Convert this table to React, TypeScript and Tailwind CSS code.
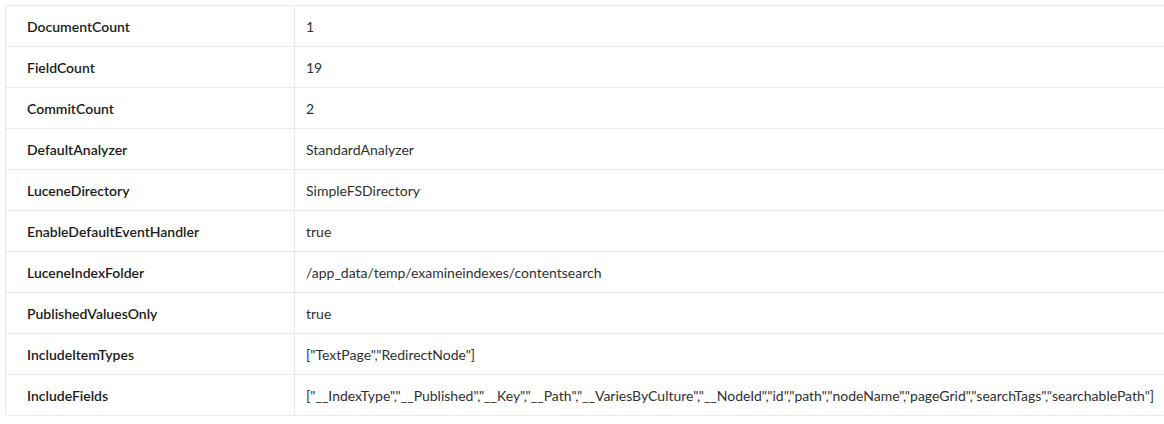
const rows: [string, string][] = [
  ['DocumentCount', '1'],
  ['FieldCount', '19'],
  ['CommitCount', '2'],
  ['DefaultAnalyzer', 'StandardAnalyzer'],
  ['LuceneDirectory', 'SimpleFSDirectory'],
  ['EnableDefaultEventHandler', 'true'],
  ['LuceneIndexFolder', '/app_data/temp/examineindexes/contentsearch'],
  ['PublishedValuesOnly', 'true'],
  ['IncludeItemTypes', '["TextPage","RedirectNode"]'],
  [
    'IncludeFields',
    '["__IndexType","__Published","__Key","__Path","__VariesByCulture","__NodeId","id","path","nodeName","pageGrid","searchTags","searchablePath"]',
  ],
];

export default function App() {
  return (
    <div className="w-[1164px] h-[424px] overflow-hidden bg-white pt-[5px] pl-[5px] font-['Lato','Liberation_Sans',sans-serif] text-[14px]">
      <div className="w-[1175px] border border-[#e9e9eb] rounded-[3px]">
        {rows.map(([key, value], i) => (
          <div
            key={key}
            className={`flex h-[40px] box-content items-center ${i > 0 ? 'border-t border-[#e9e9eb]' : ''}`}
          >
            <div className="w-[289px] h-full flex items-center pl-[21px] font-semibold text-[#1b1b1b] border-r border-[#e9e9eb] shrink-0">
              {key}
            </div>
            <div className="pl-[11px] text-[#303033] whitespace-nowrap">{value}</div>
          </div>
        ))}
      </div>
    </div>
  );
}
